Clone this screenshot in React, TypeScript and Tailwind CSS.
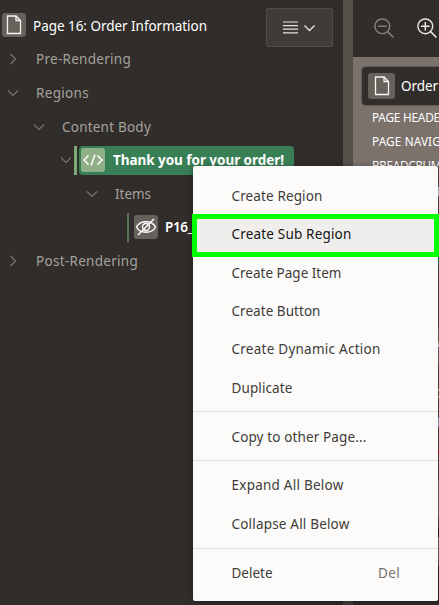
import React from "react";

function Chevron({ down = false }: { down?: boolean }) {
  return (
    <svg className="h-3 w-3 shrink-0" viewBox="0 0 12 12" fill="none" stroke="#77736f" strokeWidth="1.2">
      <path d={down ? "M1 3.5 L6 8.5 L11 3.5" : "M3.5 1 L8.5 6 L3.5 11"} />
    </svg>
  );
}

function PageIcon({ className }: { className: string }) {
  return (
    <span className={"flex shrink-0 items-center justify-center rounded-[3px] bg-[#67615c] " + className}>
      <svg width="16" height="20" viewBox="0 0 16 20" fill="none" stroke="#f8f5f1" strokeWidth="1.3">
        <path d="M1.5 1 H10 L14.5 5.5 V18.5 H1.5 Z M10 1 V5.5 H14.5" />
      </svg>
    </span>
  );
}

function Zoom({ plus = false }: { plus?: boolean }) {
  return (
    <svg className="h-5 w-5 shrink-0" viewBox="0 0 20 20" fill="none" stroke={plus ? "#e8e5e2" : "#84807c"} strokeWidth="1.5">
      <circle cx="8.3" cy="8.3" r="7.4" />
      <path d={plus ? "M4 8.3 H12.6 M8.3 4 V12.6 M13.6 13.6 L19.5 19.5" : "M4 8.3 H12.6 M13.6 13.6 L19.5 19.5"} />
    </svg>
  );
}

function Fit({ w, className = "", children }: { w: number; className?: string; children: string }) {
  const ref = React.useRef<HTMLSpanElement>(null);
  React.useLayoutEffect(() => {
    const el = ref.current;
    if (!el) return;
    el.style.letterSpacing = "0px";
    const gap = (w - el.getBoundingClientRect().width) / children.length;
    el.style.letterSpacing = gap + "px";
  }, [w, children]);
  return (
    <span ref={ref} className={"shrink-0 whitespace-nowrap " + className}>
      {children}
    </span>
  );
}

function Item({ label, w, active = false, hint }: { label: string; w: number; active?: boolean; hint?: string }) {
  return (
    <div className={"flex h-[38.33px] shrink-0 items-center justify-between pr-[38px] pl-[38.5px] " + (active ? "bg-[#f0eeec] text-[#161513]" : "text-[#403c38]")}>
      <Fit w={w}>{label}</Fit>
      {hint && <Fit w={22} className="text-[#77736f]">{hint}</Fit>}
    </div>
  );
}

const edge: [string, string][] = [
  ["h-[21px]", "bg-[#59534f]"], ["h-[9px]", "bg-[#a8cef2]"], ["h-[18px]", "bg-[#59534f]"],
  ["h-[43px]", "bg-[#2e6a4a]"], ["h-[13px]", "bg-[#2e6a4a]"], ["h-[57px]", "bg-[#4a4541]"],
  ["h-[15px]", "bg-[#6c655f]"], ["h-[2px]", "bg-[#c6aa8b]"], ["h-[3px]", "bg-[#b8d9f2]"],
  ["h-[18px]", "bg-[#6b645f]"], ["h-[24px]", "bg-[#4a4541]"], ["h-[2px]", "bg-[#c6aa8b]"],
  ["h-[5px]", "bg-[#4a4541]"], ["h-[2px]", "bg-[#c6aa8b]"], ["h-[20px]", "bg-[#4a4541]"],
  ["h-[9px]", "bg-[#80add6]"], ["h-[22px]", "bg-[#4a4541]"], ["h-[6px]", "bg-[#a92f2b]"],
  ["h-[25px]", "bg-[#4a4541]"], ["h-[38px]", "bg-[#6b645f]"], ["h-[10px]", "bg-[#4a4541]"],
  ["h-[9px]", "bg-[#201e1c]"], ["h-[29px]", "bg-[#6b645f]"], ["h-[39px]", "bg-[#2b2826]"],
];

export default function App() {
  return (
    <div className="relative flex h-[605px] w-[439px] overflow-hidden bg-[#312d2a] font-['Noto_Sans',sans-serif] text-[13.5px] leading-5">
      <div className="flex w-[343px] shrink-0 flex-col text-[#a5a19d]">
        <div className="flex h-[42px] items-start pl-[2px]">
          <PageIcon className="mt-[13px] h-6 w-6" />
          <Fit w={174} className="mt-4 ml-[7px] text-white">Page 16: Order Information</Fit>
          <div className="mt-2 mr-[10px] ml-auto flex h-[39px] w-[67px] shrink-0 items-center gap-1.5 rounded-[2px] border border-[#524e47] bg-[#3f3b36] pl-4">
            <svg width="15" height="13" viewBox="0 0 15 13" stroke="#e5e2df" strokeWidth="1.2">
              <path d="M0 1 H15 M0 4.6 H15 M0 8.2 H15 M0 11.8 H15" />
            </svg>
            <svg width="11" height="8" viewBox="0 0 11 8" fill="none" stroke="#e5e2df" strokeWidth="1.4">
              <path d="M.5 1.5 L5.5 6.5 L10.5 1.5" />
            </svg>
          </div>
        </div>
        <div className="flex h-[34px] items-center gap-[17px] pl-[7px]"><Chevron /><Fit w={95}>Pre-Rendering</Fit></div>
        <div className="flex h-[34px] items-center gap-[17px] pl-[7px]"><Chevron down /><Fit w={53}>Regions</Fit></div>
        <div className="flex h-[33px] items-center gap-[17px] pl-[33px]"><Chevron down /><Fit w={89}>Content Body</Fit></div>
        <div className="flex h-[34px] items-center pl-[60px]">
          <Chevron down />
          <span className="ml-[2px] h-[29px] w-[3px] bg-[#7faa78]" />
          <div className="ml-[2px] flex h-[29px] w-[215px] items-center rounded-[4px] bg-[#397f55] pl-[2px] text-white">
            <span className="flex h-6 w-6 items-center justify-center rounded-[3px] bg-[#8faf86]">
              <svg width="20" height="14" viewBox="0 0 20 14" fill="none" stroke="white" strokeWidth="1.5">
                <path d="M5.5 2.5 L1 7 L5.5 11.5 M14.5 2.5 L19 7 L14.5 11.5 M12 1.5 L8 12.5" />
              </svg>
            </span>
            <Fit w={171} className="ml-2 font-bold">Thank you for your order!</Fit>
          </div>
        </div>
        <div className="flex h-[33px] items-center gap-[17px] pl-[86px]"><Chevron down /><Fit w={36}>Items</Fit></div>
        <div className="flex h-[34px] items-center pl-[127px]">
          <span className="h-[29px] w-[2px] bg-[#587553]" />
          <span className="ml-[5px] flex h-6 w-6 items-center justify-center rounded-[3px] bg-[#67615c]">
            <svg width="22" height="18" viewBox="0 0 22 18" fill="none" stroke="white" strokeWidth="1.4">
              <path d="M1.5 9 C5 2 17 2 20.5 9 C17 16 5 16 1.5 9 Z M3 17 L19 1" />
              <circle cx="11" cy="9" r="3.5" />
            </svg>
          </span>
          <Fit w={28} className="ml-[7px] font-semibold text-white">P16_</Fit>
        </div>
        <div className="flex h-[34px] items-center gap-[17px] pl-[7px]"><Chevron /><Fit w={102}>Post-Rendering</Fit></div>
      </div>
      <div className="w-[10px] shrink-0 bg-[#55514a]" />
      <div className="flex w-[86px] shrink-0 flex-col overflow-hidden bg-[#7b726c]">
        <div className="flex h-[57px] shrink-0 items-start gap-[23px] bg-[#312d2a] pt-[18px] pl-[21px]"><Zoom /><Zoom plus /></div>
        <div className="mt-[10px] ml-[9px] flex h-[38px] w-[110px] shrink-0 items-center rounded-[4px] bg-[#312d2a] pl-[6px] text-white shadow-[0_0_2px_#312d2a]">
          <PageIcon className="h-[26px] w-[27px]" />
          <Fit w={37} className="ml-[6px]">Order</Fit>
        </div>
        <div className="ml-[19px] flex h-[61px] shrink-0 flex-col items-start text-[11.8px] leading-6 text-white">
          <Fit w={75}>PAGE HEADER</Fit>
          <Fit w={105}>PAGE NAVIGATION</Fit>
          <Fit w={101}>BREADCRUMB BAR</Fit>
        </div>
        <div className="flex h-[439px] shrink-0 flex-col items-end bg-[#312d2a]">
          {edge.map(([height, color], i) => <span key={i} className={"w-px shrink-0 " + height + " " + color} />)}
        </div>
      </div>
      <div className="absolute top-[601px] left-[343px] h-1 w-[10px] bg-[#45413c]" />
      <div className="absolute top-[166px] left-[193px] flex h-[435px] w-[245px] flex-col rounded-[2px] bg-[#fcfbfa] pt-[11px] shadow-[0_1px_6px_#00000066]">
        <Item label="Create Region" w={91} />
        <Item label="Create Sub Region" w={120} active />
        <Item label="Create Page Item" w={110} />
        <Item label="Create Button" w={89} />
        <Item label="Create Dynamic Action" w={149} />
        <Item label="Duplicate" w={61} />
        <div className="mt-1 mb-[6px] h-px shrink-0 bg-[#e2e0de]" />
        <Item label="Copy to other Page..." w={135} />
        <div className="mt-1 mb-[5px] h-px shrink-0 bg-[#e2e0de]" />
        <Item label="Expand All Below" w={112} />
        <Item label="Collapse All Below" w={118} />
        <div className="mt-[5px] mb-[5px] h-px shrink-0 bg-[#e2e0de]" />
        <Item label="Delete" w={41} hint="Del" />
      </div>
      <div className="absolute top-[214px] left-[192px] h-[43px] w-[247px] border-5 border-[#00ff00]" />
    </div>
  );
}
